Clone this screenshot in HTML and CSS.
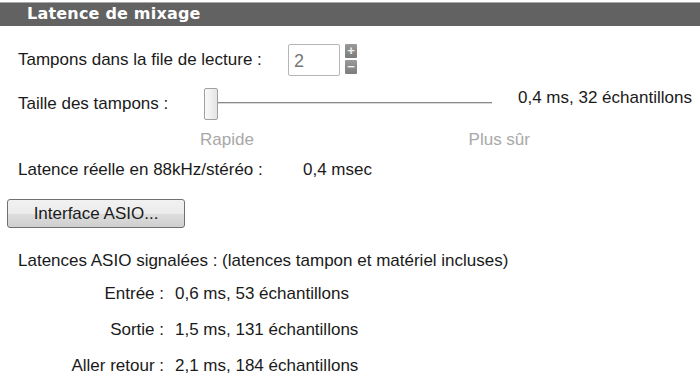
FILE: index.html
```html
<!DOCTYPE html>
<html lang="fr">

<head>
    <meta charset="UTF-8">
    <title>Latence de mixage</title>
    <link rel="stylesheet" href="styles.css">
</head>

<body>
    <h1 class="group-title">Latence de mixage</h1>

    <main class="panel">
        <div class="row buffers">
            <span class="label">Tampons dans la file de lecture :</span>
            <span class="spin">
                <input class="spin-box" type="text" value="2">
                <span class="spin-buttons">
                    <span class="spin-btn">+</span>
                    <span class="spin-btn">&minus;</span>
                </span>
            </span>
        </div>

        <div class="row size">
            <span class="label">Taille des tampons :</span>
            <span class="slider">
                <span class="thumb"></span>
                <span class="track"></span>
            </span>
            <span class="size-value">0,4 ms, 32 échantillons</span>
        </div>

        <div class="row hints">
            <span>Rapide</span>
            <span>Plus sûr</span>
        </div>

        <div class="row real">
            <span class="label">Latence réelle en 88kHz/stéréo :</span>
            <span>0,4 msec</span>
        </div>

        <button class="asio-btn" type="button">Interface ASIO...</button>

        <p class="reported">Latences ASIO signalées : (latences tampon et matériel incluses)</p>

        <dl class="latencies">
            <dt>Entrée :</dt>
            <dd>0,6 ms, 53 échantillons</dd>
            <dt>Sortie :</dt>
            <dd>1,5 ms, 131 échantillons</dd>
            <dt>Aller retour :</dt>
            <dd>2,1 ms, 184 échantillons</dd>
        </dl>
    </main>
</body>

</html>
```

FILE: styles.css
```css
body {
    margin: 0;
    font-family: 'Liberation Sans', Arial, sans-serif;
    font-size: 17px;
    line-height: 20px;
    color: #1a1a1a;
    background-color: #fff;
    overflow: hidden;
}

.group-title {
    margin: 2px 0 0;
    height: 24px;
    padding-left: 27px;
    box-sizing: border-box;
    border-top: 1px solid #a8a8a8;
    background-color: #626262;
    color: #fff;
    font-family: 'DejaVu Sans', Verdana, sans-serif;
    font-size: 16px;
    font-weight: bold;
    line-height: 22px;
    letter-spacing: 0.2px;
}

.panel {
    padding-left: 18px;
}

.row {
    display: flex;
    align-items: center;
}

.buffers {
    margin-top: 18px;
    height: 32px;
}

.buffers .label {
    width: 270px;
}

.spin {
    display: flex;
    gap: 5px;
}

.spin-box {
    width: 52px;
    height: 32px;
    box-sizing: border-box;
    border: 1px solid #b5b5b5;
    border-radius: 2px;
    padding: 2px 0 0 5px;
    font: inherit;
    font-size: 18px;
    color: #777;
}

.spin-buttons {
    display: flex;
    flex-direction: column;
    gap: 2px;
    width: 12px;
}

.spin-btn {
    height: 14px;
    border-radius: 1px;
    background: linear-gradient(#9a9a9a, #7c7c7c);
    color: #eee;
    font-size: 13px;
    font-weight: bold;
    line-height: 14px;
    text-align: center;
}

.size {
    margin-top: 12px;
    height: 32px;
}

.size .label {
    width: 186px;
}

.slider {
    display: flex;
    align-items: center;
    width: 288px;
}

.thumb {
    width: 12px;
    height: 30px;
    border: 1px solid #a0a0a0;
    border-radius: 2px;
    background: linear-gradient(to right, #fafafa, #e4e4e4);
}

.track {
    flex: 1;
    height: 1px;
    margin-top: -2px;
    background-color: #8a8a8a;
    border-bottom: 1px solid #d8d8d8;
}

.size-value {
    margin: -12px 0 0 26px;
}

.hints {
    justify-content: space-between;
    width: 330px;
    margin: 10px 0 0 182px;
    color: #a8a8a8;
}

.real {
    margin-top: 10px;
}

.real .label {
    width: 285px;
}

.asio-btn {
    display: block;
    margin: 19px 0 0 -11px;
    width: 178px;
    height: 29px;
    border: 1px solid #707070;
    border-radius: 3px;
    background: linear-gradient(#f2f2f2 0%, #ebebeb 50%, #dddddd 51%, #cfcfcf 100%);
    font: inherit;
    color: #1a1a1a;
}

.reported {
    margin: 23px 0 0;
}

.latencies {
    display: grid;
    grid-template-columns: 146px auto;
    column-gap: 11px;
    row-gap: 16px;
    margin: 13px 0 0;
}

.latencies dt {
    text-align: right;
}

.latencies dd {
    margin: 0;
}
```
